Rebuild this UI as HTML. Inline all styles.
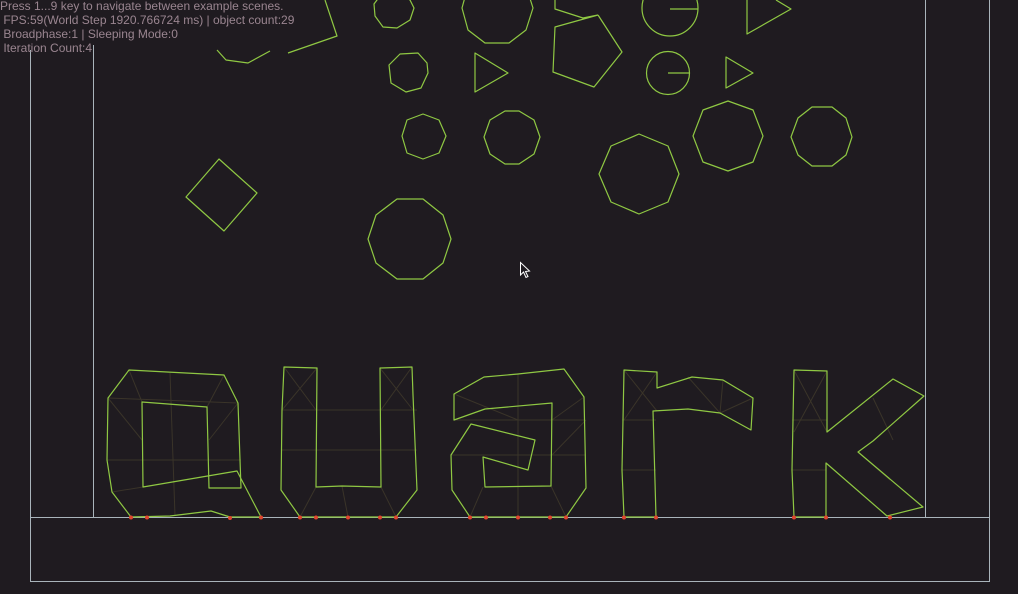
<!DOCTYPE html>
<html><head><meta charset="utf-8"><style>
html,body{margin:0;padding:0;background:#1f1b20;overflow:hidden}
#t{position:absolute;left:0;top:-1px;font:12px/14px "Liberation Sans","DejaVu Sans",sans-serif;color:#9a8590;white-space:pre}
svg{position:absolute;left:0;top:0}
</style></head><body>
<svg width="1018" height="594" viewBox="0 0 1018 594">
<g fill="none" stroke="#a9b4bb" stroke-width="1">
<path d="M30.5 50V581.5H989.5V0"/>
<path d="M93.5 45V517.5"/><path d="M925.5 0V517.5"/>
<path d="M30 517.5H989"/>
</g>
<g stroke="#3a3429" stroke-width="1" fill="none">
<path d="M108 398L238 403M107 460L241 460M129 370L142 402M224 375L207 407M112 492L143 487M170 373L175 516M282 410L417 410M281 450L417 450M300 517L316 487M396 517L381 487M342 486L348 517M454 420L584 420M451 455L586 455M470 517L483 487M566 517L551 486M518 374L518 517M622 420L656 420M622 470L656 470M624 370L657 411M657 372L624 420M723 380L720 413M792 420L827 420M792 470L826 470M794 370L827 432M827 371L794 432M873 398L893 440M858 452L890 480M108 398L142 440M238 403L209 440M284 367L316 410M317 368L282 410M380 368L413 410M412 367L381 410M586 420L552 455M454 394L518 420M584 397L552 420M753 398L720 413M688 377L720 413"/>
</g>
<g fill="none" stroke="#8fc843" stroke-width="1.2" stroke-linejoin="round">
<path d="M129 370L224 375L238 403L241 488L209 488L207 407L142 402L143 487L237 471L261 517L230 517L211 511L170 516L131 517L112 492L107 460L108 398Z"/>
<path d="M284 367L317 368L316 487L342 486L381 487L380 368L412 367L413 395L417 490L396 517L300 517L281 490L282 410Z"/>
<path d="M454 394L484 377L518 374L564 369L584 397L586 488L566 517L470 517L452 490L451 455L471 424L535 440L528 470L483 457L485 487L551 486L552 403L485 409L454 420Z"/>
<path d="M624 370L657 372L657 388L692 377L723 380L753 398L751 430L720 413L688 409L653 411L656 517L624 517L622 470Z"/>
<path d="M794 370L827 371L827 432L893 379L924 396L873 441L858 452L923 507L887 516L826 463L826 517L794 517L792 470Z"/>
</g>
<g fill="none" stroke="#8fc843" stroke-width="1.2" stroke-linejoin="round">
<path d="M217 50L226 60L248 63L270 51M288 53L337 36L325 0"/>
<polygon points="414,8 410,20 397,28 383,27 375,16 374,4 383,-8 397,-8 410,0"/>
<polygon points="533,8 526,30 509,43 485,43 468,30 462,8 468,-14 485,-27 509,-27 526,-14"/>
<path d="M555 0V9L583 18L598 15M598 15L555 27L553 72L594 87L622 52L598 15"/>
<circle cx="670" cy="8" r="28"/><path d="M670 9H698"/>
<path d="M747 0V34L791 9L776 0"/>
<polygon points="428,73 421,88 406,92 391,83 389,65 400,54 418,53 427,63"/>
<polygon points="475,53 475,92 508,73"/>
<circle cx="668" cy="73" r="21.5"/><path d="M668 73H690"/>
<polygon points="726,57 726,88 753,73"/>
<polygon points="446,136 439,153 423,159 407,153 402,136 407,120 423,114 439,120"/>
<polygon points="540,137 534,154 519,164 505,164 490,154 484,137 490,120 505,111 519,111 534,120"/>
<polygon points="679,174 668,202 639,214 611,202 599,174 611,146 639,134 668,146"/>
<polygon points="763,136 753,162 728,171 703,162 693,136 703,110 728,101 753,110"/>
<polygon points="852,137 846,155 832,166 812,166 798,155 791,137 798,118 812,107 832,107 846,118"/>
<polygon points="186,197 219,159 257,193 224,231"/>
<polygon points="451,239 443,263 423,279 397,279 376,263 368,239 376,215 397,199 423,199 443,215"/>
</g>
<g fill="#e0452e">
<circle cx="131" cy="517.5" r="2"/><circle cx="147" cy="517.5" r="2"/><circle cx="230" cy="518" r="2"/><circle cx="261" cy="517.5" r="2"/><circle cx="300" cy="517.5" r="2"/><circle cx="316" cy="517.5" r="2"/><circle cx="348" cy="517.5" r="2"/><circle cx="380" cy="517.5" r="2"/><circle cx="396" cy="517.5" r="2"/><circle cx="470" cy="517.5" r="2"/><circle cx="486" cy="517.5" r="2"/><circle cx="518" cy="517.5" r="2"/><circle cx="550" cy="517.5" r="2"/><circle cx="566" cy="517.5" r="2"/><circle cx="624" cy="517.5" r="2"/><circle cx="656" cy="517.5" r="2"/><circle cx="794" cy="517.5" r="2"/><circle cx="826" cy="517.5" r="2"/><circle cx="890" cy="517.5" r="2"/>
</g>
<path d="M520.5 262.5V275L523.5 272L526 277.5L528 276.5L525.5 271.5L529.5 271Z" fill="#1f1b20" stroke="#fff" stroke-width="1"/>
</svg>
<div id="t">Press 1...9 key to navigate between example scenes.
 FPS:59(World Step 1920.766724 ms) | object count:29
 Broadphase:1 | Sleeping Mode:0
 Iteration Count:4</div>
</body></html>
